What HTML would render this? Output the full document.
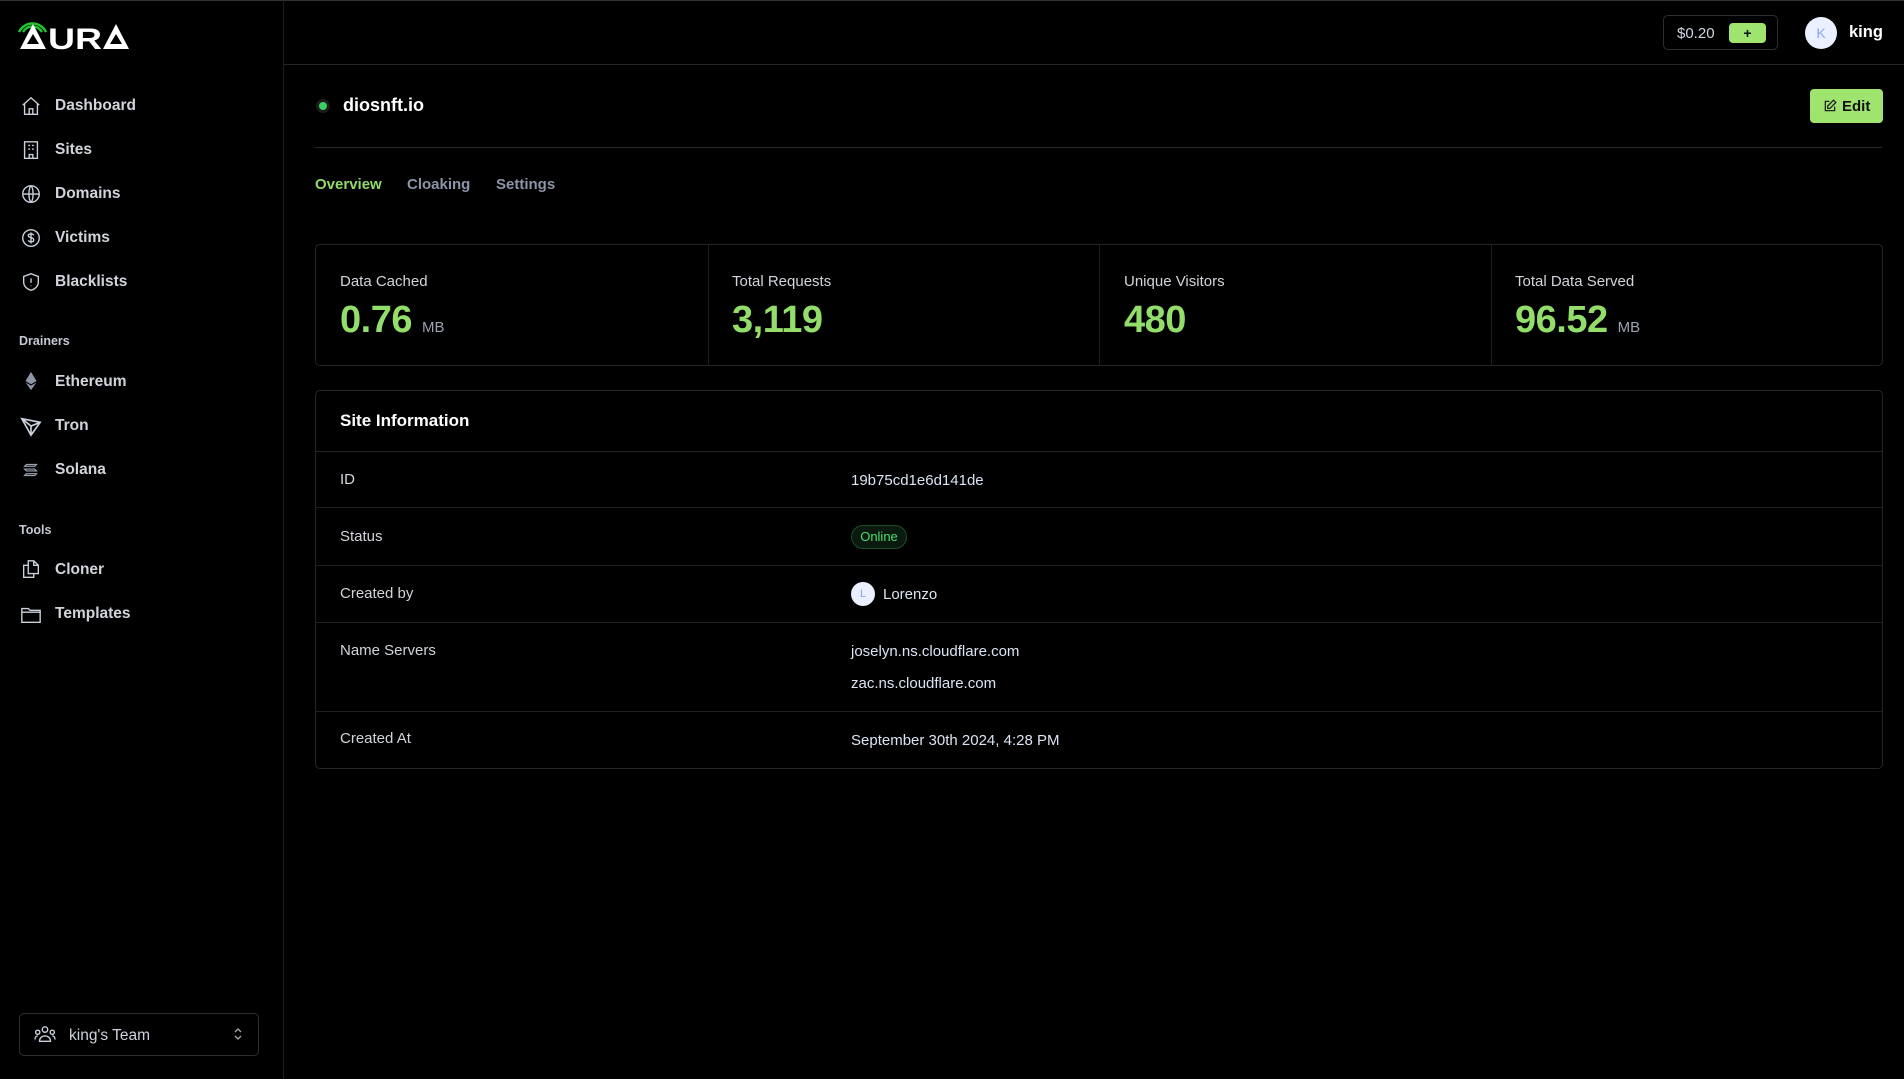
<!DOCTYPE html>
<html><head><meta charset="utf-8"><style>
*{margin:0;padding:0;box-sizing:border-box}
body{width:1904px;height:1079px;background:#000;font-family:"Liberation Sans",sans-serif;color:#d1d5db;position:relative;overflow:hidden}
.a{position:absolute;white-space:nowrap}
.nav{font-size:15.5px;font-weight:bold;color:#d1d5db;left:55px}
.ic{position:absolute;left:20px;width:22px;height:22px}
.sec{font-size:12.5px;font-weight:bold;color:#c4c9d2;left:19px}
.lbl{font-size:15px;color:#d1d5db}
.val{font-size:38px;font-weight:bold;color:#93dd6b;letter-spacing:-0.5px}
.unit{font-size:15px;color:#9ca3af;font-weight:normal;letter-spacing:0}
.rl{left:340px;font-size:15px;color:#d1d5db}
.rv{left:851px;font-size:15px;color:#dbe4f3}
.hl{position:absolute;left:315px;width:1567px;height:1px;background:#1f1f1f}
</style></head><body>
<div class="a" style="left:0;top:0;width:1904px;height:1px;background:#333"></div>
<div class="a" style="left:283px;top:0;width:1px;height:1079px;background:#1f1f1f"></div>
<div class="a" style="left:284px;top:64px;width:1620px;height:1px;background:#262626"></div>

<svg class="a" style="left:17px;top:16px" width="116" height="36" viewBox="0 0 116 36">
<path d="M6 16a11 11 0 0 1 19 0M2 16a15 15 0 0 1 27 0" stroke="#22c52e" stroke-width="2.5" fill="none"/>
<path d="M16 8 L3 33 L29 33 Z M16 18 L10 28 L22 28 Z" fill="#fff" fill-rule="evenodd"/>
<text x="31" y="33" font-family="Liberation Sans" font-weight="bold" font-size="30" fill="#fff" textLength="54" lengthAdjust="spacingAndGlyphs">UR</text>
<path d="M99 8 L86 33 L112 33 Z M99 18 L93 28 L105 28 Z" fill="#fff" fill-rule="evenodd"/>
</svg>

<svg class="ic" style="top:95px" viewBox="0 0 24 24" fill="none" stroke="#cbd2dc" stroke-width="1.5"><path d="M3 11l9-8 9 8M5 9v12h14V9M10 21v-6h4v6"/></svg>
<div class="a nav" style="top:97px">Dashboard</div>
<svg class="ic" style="top:139px" viewBox="0 0 24 24" fill="none" stroke="#cbd2dc" stroke-width="1.5"><path d="M5 3h14v18H5zM9 7h2M13 7h2M9 11h2M13 11h2M10 21v-4h4v4"/></svg>
<div class="a nav" style="top:141px">Sites</div>
<svg class="ic" style="top:183px" viewBox="0 0 24 24" fill="none" stroke="#cbd2dc" stroke-width="1.5"><circle cx="12" cy="12" r="9"/><path d="M3 12h18M12 3c3 3 3 15 0 18M12 3c-3 3-3 15 0 18"/></svg>
<div class="a nav" style="top:185px">Domains</div>
<svg class="ic" style="top:227px" viewBox="0 0 24 24" fill="none" stroke="#cbd2dc" stroke-width="1.5"><circle cx="12" cy="12" r="9"/><path d="M15 9c-1-2-6-2-6 0.5s6 1.5 6 4.5-5 2.5-6 0.5M12 6v12"/></svg>
<div class="a nav" style="top:229px">Victims</div>
<svg class="ic" style="top:271px" viewBox="0 0 24 24" fill="none" stroke="#cbd2dc" stroke-width="1.5"><path d="M12 3l8 3v6c0 5-4 8-8 9-4-1-8-4-8-9V6z M12 8v5M12 16v.5"/></svg>
<div class="a nav" style="top:273px">Blacklists</div>

<div class="a sec" style="top:334px">Drainers</div>
<svg class="ic" style="top:370px" viewBox="0 0 24 24"><path d="M12 2l6 10-6 3.5L6 12z" fill="#8e96a8"/><path d="M6 13.5l6 3.5 6-3.5-6 8.5z" fill="#8e96a8"/></svg>
<div class="a nav" style="top:373px">Ethereum</div>
<svg class="ic" style="top:415px" viewBox="0 0 24 24" fill="none" stroke="#cbd2dc" stroke-width="1.8"><path d="M2 4l20 4-10 14zM2 4l10 8 10-4M12 12v10"/></svg>
<div class="a nav" style="top:417px">Tron</div>
<svg class="ic" style="top:459px" viewBox="0 0 24 24" fill="none" stroke="#9aa2b1" stroke-width="1.3"><path d="M7 6h11l-2 2H5zM5 11h11l2 2H7zM7 16h11l-2 2H5z"/></svg>
<div class="a nav" style="top:461px">Solana</div>

<div class="a sec" style="top:523px">Tools</div>
<svg class="ic" style="top:558px" viewBox="0 0 24 24" fill="none" stroke="#cbd2dc" stroke-width="1.5"><path d="M9 3h6l5 5v9H9zM15 3v5h5M9 8H4v13h11v-4"/></svg>
<div class="a nav" style="top:561px">Cloner</div>
<svg class="ic" style="top:603px" viewBox="0 0 24 24" fill="none" stroke="#cbd2dc" stroke-width="1.5"><path d="M2 6h7l2 2h11v13H2zM2 10h20"/></svg>
<div class="a nav" style="top:605px">Templates</div>

<div class="a" style="left:19px;top:1013px;width:240px;height:43px;border:1px solid #2e2e2e;border-radius:5px"></div>
<svg class="a" style="left:34px;top:1025px" width="22" height="20" viewBox="0 0 24 22" fill="none" stroke="#cbd2dc" stroke-width="1.5"><circle cx="12" cy="5" r="3"/><circle cx="4" cy="8" r="2.3"/><circle cx="20" cy="8" r="2.3"/><path d="M6 18c0-4 3-6 6-6s6 2 6 6zM1 16c0-2 1-4 3-4M23 16c0-2-1-4-3-4"/></svg>
<div class="a" style="left:69px;top:1027px;font-size:15.5px;color:#cdd3dc">king's Team</div>
<svg class="a" style="left:234px;top:1027px" width="8" height="14" viewBox="0 0 8 14" fill="none" stroke="#aaa" stroke-width="1.3"><path d="M1 5l3-3 3 3M1 9l3 3 3-3"/></svg>

<div class="a" style="left:1663px;top:15px;width:115px;height:35px;border:1px solid #2e2e2e;border-radius:5px"></div>
<div class="a" style="left:1677px;top:25px;font-size:15px;color:#cfd6e4">$0.20</div>
<div class="a" style="left:1729px;top:23px;width:37px;height:20px;background:#9ee46f;border-radius:4px;color:#111;font-weight:bold;font-size:14px;text-align:center;line-height:20px">+</div>
<div class="a" style="left:1805px;top:17px;width:32px;height:32px;border-radius:50%;background:#eaf0ff;color:#8ea4f0;font-size:14px;text-align:center;line-height:32px">K</div>
<div class="a" style="left:1849px;top:23px;font-size:16.5px;font-weight:bold;color:#fff">king</div>

<div class="a" style="left:316px;top:99px;width:14px;height:14px;border-radius:50%;background:#1c1c1c"></div>
<div class="a" style="left:319px;top:102px;width:8px;height:8px;border-radius:50%;background:#3ccf64"></div>
<div class="a" style="left:343px;top:95px;font-size:18px;font-weight:bold;color:#fff">diosnft.io</div>
<div class="a" style="left:1810px;top:89px;width:73px;height:34px;background:#9ee46f;border-radius:4px"></div>
<svg class="a" style="left:1823px;top:99px" width="14" height="14" viewBox="0 0 24 24" fill="none" stroke="#222" stroke-width="2.2"><path d="M11 4H4v16h16v-7M18 2l4 4-10 10H8v-4z"/></svg>
<div class="a" style="left:1842px;top:98px;font-size:15px;font-weight:bold;color:#111">Edit</div>
<div class="hl" style="top:147px;background:#2a2a2a"></div>

<div class="a" style="left:315px;top:176px;font-size:15px;font-weight:bold;color:#8fdc6a">Overview</div>
<div class="a" style="left:407px;top:176px;font-size:15px;font-weight:bold;color:#8b95a7">Cloaking</div>
<div class="a" style="left:496px;top:176px;font-size:15px;font-weight:bold;color:#8b95a7">Settings</div>

<div class="a" style="left:315px;top:244px;width:1568px;height:122px;border:1px solid #262626;border-radius:5px"></div>
<div class="a" style="left:708px;top:245px;width:1px;height:120px;background:#1e1e1e"></div>
<div class="a" style="left:1099px;top:245px;width:1px;height:120px;background:#1e1e1e"></div>
<div class="a" style="left:1491px;top:245px;width:1px;height:120px;background:#1e1e1e"></div>
<div class="a lbl" style="left:340px;top:273px">Data Cached</div>
<div class="a val" style="left:340px;top:299px">0.76 <span class="unit">MB</span></div>
<div class="a lbl" style="left:732px;top:273px">Total Requests</div>
<div class="a val" style="left:732px;top:299px">3,119</div>
<div class="a lbl" style="left:1124px;top:273px">Unique Visitors</div>
<div class="a val" style="left:1124px;top:299px">480</div>
<div class="a lbl" style="left:1515px;top:273px">Total Data Served</div>
<div class="a val" style="left:1515px;top:299px">96.52 <span class="unit">MB</span></div>

<div class="a" style="left:315px;top:390px;width:1568px;height:379px;border:1px solid #262626;border-radius:5px"></div>
<div class="a" style="left:340px;top:411px;font-size:17px;font-weight:bold;color:#fff">Site Information</div>
<div class="hl" style="top:451px;background:#262626"></div>
<div class="hl" style="top:507px"></div>
<div class="hl" style="top:565px"></div>
<div class="hl" style="top:622px"></div>
<div class="hl" style="top:711px"></div>
<div class="a rl" style="top:471px">ID</div>
<div class="a rv" style="top:472px">19b75cd1e6d141de</div>
<div class="a rl" style="top:528px">Status</div>
<div class="a" style="left:851px;top:525px;width:56px;height:24px;border:1px solid #1e4d2a;background:#0a1a0e;border-radius:12px;color:#4ade70;font-size:13px;text-align:center;line-height:22px">Online</div>
<div class="a rl" style="top:585px">Created by</div>
<div class="a" style="left:851px;top:582px;width:24px;height:24px;border-radius:50%;background:#eaf0ff;color:#8ea4f0;font-size:11px;text-align:center;line-height:24px">L</div>
<div class="a rv" style="left:883px;top:586px">Lorenzo</div>
<div class="a rl" style="top:642px">Name Servers</div>
<div class="a rv" style="top:643px">joselyn.ns.cloudflare.com</div>
<div class="a rv" style="top:675px">zac.ns.cloudflare.com</div>
<div class="a rl" style="top:730px">Created At</div>
<div class="a rv" style="top:732px">September 30th 2024, 4:28 PM</div>
</body></html>
